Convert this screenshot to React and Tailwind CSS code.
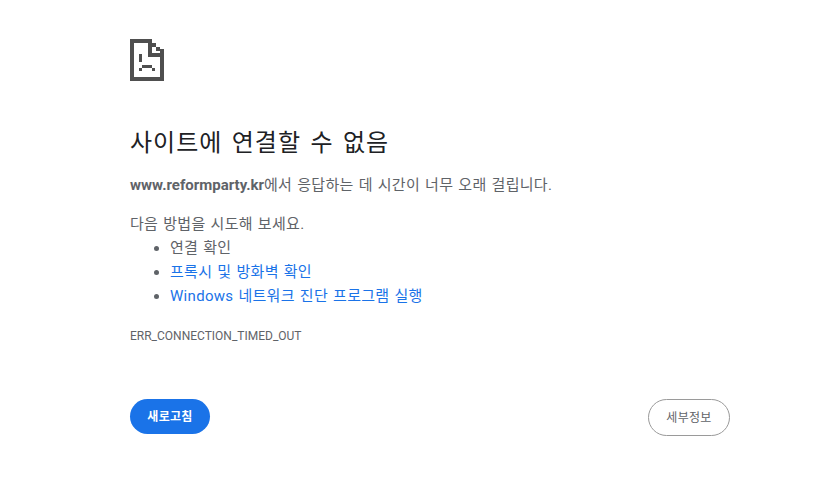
import React from 'react';

const font = { fontFamily: 'Roboto, "Noto Sans CJK KR", sans-serif' };

// pixel-art sad page icon
function SadPage() {
  return (
    <svg width="34" height="42" viewBox="0 0 34 42" fill="#4f4f4f" shapeRendering="crispEdges">
      <path d="M0 0h22v4H4v34h26V14h4v28H0z" />
      <path d="M18 0h4v14h8v4H18zM22 4h4v4h-4zM26 8h4v4h-4zM30 10h4v4h-4z" />
      <path d="M9 15h3v8H9z" />
      <path d="M12 26h10v3H12zM9 29h3v3H9zM22 29h3v3h-3z" />
    </svg>
  );
}

export default function App() {
  return (
    <div className="min-h-screen bg-white text-[#5f6368]" style={font}>
      <div className="w-[600px] ml-[130px] pt-[39px]">
        <SadPage />
        <h1 className="mt-[47px] text-[24px] leading-[30px] font-normal text-[#202124] tracking-[1px] [word-spacing:2.5px]">사이트에 연결할 수 없음</h1>
        <p className="mt-[15px] text-[15px] leading-[24px] tracking-[0.3px] [word-spacing:1px]">
          <span className="font-bold tracking-normal">www.reformparty.kr</span>에서 응답하는 데 시간이 너무 오래 걸립니다.
        </p>
        <p className="mt-[15px] text-[15px] leading-[24px] tracking-[0.3px] [word-spacing:1px]">다음 방법을 시도해 보세요.</p>
        <ul className="list-disc pl-[40px] text-[15px] leading-[24px] tracking-[0.3px] [word-spacing:1px]">
          <li>연결 확인</li>
          <li><a className="text-[#1a73e8]">프록시 및 방화벽 확인</a></li>
          <li><a className="text-[#1a73e8]">Windows 네트워크 진단 프로그램 실행</a></li>
        </ul>
        <div className="mt-[20px] text-[12px] leading-[16px]">ERR_CONNECTION_TIMED_OUT</div>
        <div className="mt-[55px] flex items-start justify-between">
          <button className="w-[80px] h-[35px] rounded-full bg-[#1a73e8] text-white text-[12px] font-bold tracking-[0.3px]">새로고침</button>
          <button className="w-[82px] h-[37px] rounded-full border border-[#9a9a9a] bg-white text-[12px] text-[#5f6368] tracking-[0.3px]">세부정보</button>
        </div>
      </div>
    </div>
  );
}
